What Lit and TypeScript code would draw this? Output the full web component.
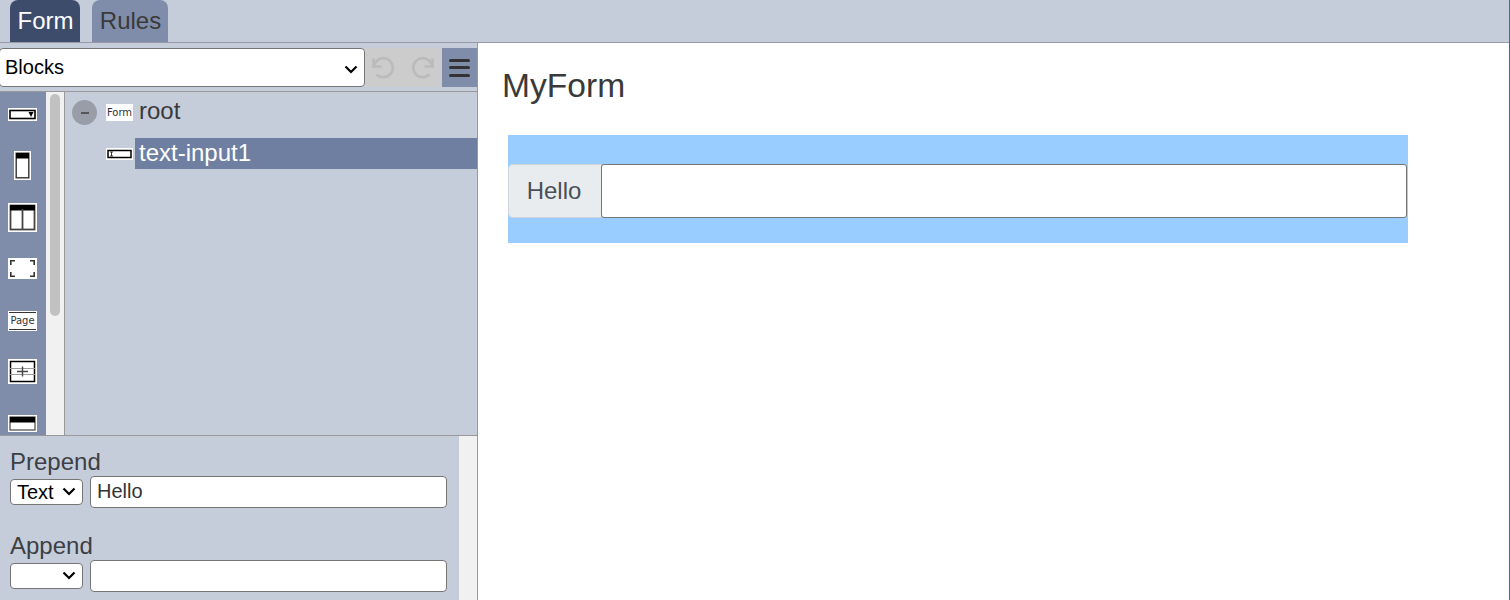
import { LitElement, html, css, svg } from "lit";
import { customElement } from "lit/decorators.js";

const palette = [
  svg`<svg width="29" height="13" viewBox="0 0 29 13"><rect width="29" height="13" fill="#fff"/><rect x="2" y="2.5" width="25" height="8" fill="#fff" stroke="#000" stroke-width="1.6"/><path d="M20.5 4h5l-2.500 5z" fill="#000"/></svg>`,
  svg`<svg width="17" height="29" viewBox="0 0 17 29"><rect width="17" height="29" fill="#fff"/><rect x="2.200" y="2.200" width="12.600" height="24.600" fill="#fff" stroke="#333" stroke-width="1.400"/><rect x="2" y="2" width="13" height="5.500" fill="#000"/></svg>`,
  svg`<svg width="29" height="29" viewBox="0 0 29 29"><rect width="29" height="29" fill="#fff"/><rect x="2.500" y="2.500" width="24" height="24" fill="#fff" stroke="#444" stroke-width="1.800"/><rect x="2" y="2" width="25" height="5.500" fill="#000"/><path d="M14.500 6v21" stroke="#444" stroke-width="1.800"/></svg>`,
  svg`<svg width="29" height="21" viewBox="0 0 29 21"><rect width="29" height="21" fill="#fff"/><path d="M2.800 7V2.800H7M22 2.800h4.200V7M2.800 14v4.200H7M22 18.200h4.200V14" fill="none" stroke="#333" stroke-width="1.600"/></svg>`,
  null,
  svg`<svg width="29" height="25" viewBox="0 0 29 25"><rect width="29" height="25" fill="#fff"/><rect x="2.500" y="2.500" width="24" height="20" fill="#fff" stroke="#000" stroke-width="1.500"/><path d="M2 9.500h25M2 15.500h25" stroke="#999" stroke-width="1"/><path d="M9 12.500h11M14.500 7.500v10" stroke="#444" stroke-width="1.400"/></svg>`,
  svg`<svg width="29" height="17" viewBox="0 0 29 17"><rect width="29" height="17" fill="#fff"/><rect x="2" y="2" width="25" height="13" fill="#fff" stroke="#444" stroke-width="1.200"/><rect x="2" y="2" width="25" height="5.500" fill="#000"/></svg>`,
];

const chevron = html`<svg class="chev" width="14" height="9" viewBox="0 0 14 9"><path d="M1.500 1.500L7 7l5.500-5.500" fill="none" stroke="#000" stroke-width="2.200"/></svg>`;

@customElement("app-root")
export class AppRoot extends LitElement {
  static styles = css`
    :host {
      display: block;
      width: 1510px;
      height: 600px;
      overflow: hidden;
      font-family: "Liberation Sans", Arial, sans-serif;
      color: #333;
      background: #fff;
      border-right: 1px solid #2f7a80;
      box-sizing: border-box;
    }
    .tabs {
      height: 42px;
      background: #c5cddb;
      border-bottom: 1px solid #99a;
      display: flex;
      gap: 12px;
      padding-left: 10px;
    }
    .tab {
      display: flex;
      align-items: center;
      justify-content: center;
      font-size: 24px;
      border-radius: 8px 8px 0 0;
      height: 42px;
      padding-left: 1px;
      box-sizing: border-box;
    }
    .tab.form { width: 70px; background: #3d4c6b; color: #fff; }
    .tab.rules { width: 76px; background: #7f8dab; color: #3a3a3a; }
    .body { display: flex; height: 557px; }
    .left {
      width: 477px;
      border-right: 1px solid #999;
      background: #c5cddb;
      display: flex;
      flex-direction: column;
      flex: none;
    }
    .toolbar {
      border-bottom: 1px solid #999;
      flex: none;
      display: flex;
      padding-top: 5px;
      box-sizing: border-box;
      height: 49px;
    }
    .sel-wrap { position: relative; flex: none; display: block; }
    .chev { position: absolute; right: 7px; top: 50%; margin-top: -5px; pointer-events: none; }
    .sel-wrap select {
      appearance: none;
      -webkit-appearance: none;
      display: block;
      box-sizing: border-box;
      font: 20px "Liberation Sans", Arial, sans-serif;
      background: #fff;
      color: #000;
      border: 1px solid #767676;
      border-radius: 4px;
      padding: 0 0 1px 5px;
      outline: 0;
    }
    .blocks { margin-left: -1px; }
    .blocks select { width: 366px; height: 39px; }
    .history {
      width: 77px;
      height: 39px;
      background: #ccc;
      display: flex;
      align-items: center;
      gap: 12px;
      padding-left: 6px;
      box-sizing: border-box;
    }
    .menu {
      width: 35px;
      height: 39px;
      background: #7f8dab;
      display: flex;
      flex-direction: column;
      align-items: center;
      justify-content: center;
      gap: 4.500px;
    }
    .menu i {
      display: block;
      width: 21px;
      height: 3px;
      background: #333;
      border-radius: 1.500px;
    }
    .mid {
      height: 343px;
      display: flex;
      border-bottom: 1px solid #999;
      flex: none;
      box-sizing: content-box;
    }
    .palette {
      width: 46px;
      background: #7f8dab;
      display: flex;
      flex-direction: column;
      align-items: center;
      gap: 6.600px;
      overflow: hidden;
      flex: none;
      box-sizing: border-box;
      padding-right: 1px;
    }
    .pitem {
      height: 45px;
      flex: none;
      display: flex;
      align-items: center;
      justify-content: center;
    }
    .pitem:first-child { margin-top: -0.5px; }
    .pagei {
      width: 29px;
      height: 20px;
      margin-top: 1px;
      background: #fff;
      box-sizing: border-box;
      display: flex;
      align-items: center;
      justify-content: center;
      font-family: "DejaVu Sans", sans-serif;
      font-size: 10px;
      color: #333;
      padding: 1px 1px;
    }
    .pagei span {
      border-top: 1px solid #333;
      border-bottom: 1px solid #333;
      width: 100%;
      height: 100%;
      box-sizing: border-box;
      text-align: center;
      line-height: 15px;
    }
    .sbar {
      width: 18px;
      background: #f1f1f1;
      flex: none;
      padding: 2px 4px 0;
      box-sizing: border-box;
    }
    .sbar i {
      display: block;
      height: 222px;
      background: #c1c1c1;
      border-radius: 5px;
    }
    .tree {
      flex: 1;
      border-left: 1px solid #999;
      font-size: 24px;
      color: #3a3a3a;
      display: flex;
      flex-direction: column;
    }
    .node {
      display: flex;
      align-items: center;
    }
    .node.root { margin-top: 8px; margin-bottom: 13px; height: 25px; padding-left: 7px; }
    .node.child { padding-left: 41px; height: 31px; }
    .minus {
      width: 25px;
      height: 25px;
      border-radius: 50%;
      background: #989da8;
      display: flex;
      align-items: center;
      justify-content: center;
      margin-right: 9px;
      flex: none;
    }
    .minus i { display: block; width: 8px; height: 2px; background: #555; }
    .formi {
      width: 27px;
      height: 17px;
      background: #fff;
      color: #333;
      font-family: "DejaVu Sans", sans-serif;
      font-size: 10px;
      line-height: 17px;
      text-align: center;
      margin-right: 6px;
      flex: none;
    }
    .rootlabel { margin-top: -4px; }
    .childicon { margin-right: 2px; display: block; flex: none; }
    .sel {
      flex: 1;
      background: #6e7fa1;
      color: #fff;
      height: 31px;
      line-height: 29px;
      padding-left: 4px;
    }
    .props { flex: 1; display: flex; min-height: 0; }
    .fields { flex: 1; padding: 12px 12px 0 10px; }
    .fscroll { width: 18px; background: #f1f1f1; flex: none; }
    .field { height: 84px; }
    .field label {
      display: block;
      font-size: 24px;
      line-height: 28px;
      color: #3c3f44;
    }
    .row { display: flex; align-items: center; gap: 7px; }
    .row select { width: 73px; height: 26px; padding-left: 6px; }
    .row input {
      flex: 1;
      min-width: 0;
      height: 32px;
      box-sizing: border-box;
      font: 20px "Liberation Sans", Arial, sans-serif;
      border: 1px solid #767676;
      border-radius: 4px;
      padding: 0 6px 2px;
      background: #fff;
      color: #333;
    }
    .main {
      flex: 1;
      padding: 21px 24px 0;
      min-width: 0;
      box-sizing: border-box;
    }
    h1 {
      margin: 0;
      font-size: 33.600px;
      font-weight: 400;
      line-height: 44px;
      color: #3a3a3a;
    }
    .block {
      margin: 27px 0 0 6px;
      width: 900px;
      height: 108px;
      background: #9cf;
      box-sizing: border-box;
      padding-top: 4px;
      display: flex;
      align-items: center;
    }
    .group { display: flex; width: 899px; height: 54px; }
    .prep {
      width: 93px;
      box-sizing: border-box;
      background: #e9ecef;
      border: 1px solid #ced4da;
      border-right: 0;
      border-radius: 5px 0 0 5px;
      color: #495057;
      font-size: 24px;
      display: flex;
      align-items: center;
      justify-content: center;
      padding-right: 2px;
      flex: none;
    }
    .group input {
      flex: 1;
      box-sizing: border-box;
      border: 1px solid #767676;
      border-radius: 3px;
      background: #fff;
    }
  `;

  render() {
    return html`
      <div class="tabs">
        <div class="tab form">Form</div>
        <div class="tab rules">Rules</div>
      </div>
      <div class="body">
        <div class="left">
          <div class="toolbar">
            <div class="sel-wrap blocks"><select><option>Blocks</option></select>${chevron}</div>
            <div class="history">
              <svg width="26" height="26" viewBox="0 0 26 26" fill="none" stroke="#bbb" stroke-width="2.600"><path d="M2.500 3.500V11.500H10.500"/><path d="M3.200 10A9.500 9.500 0 1 1 5.500 19.300"/></svg>
              <svg width="26" height="26" viewBox="0 0 26 26" fill="none" stroke="#bbb" stroke-width="2.600"><path d="M23.500 3.500V11.500H15.500"/><path d="M22.800 10A9.500 9.500 0 1 0 20.500 19.300"/></svg>
            </div>
            <div class="menu"><i></i><i></i><i></i></div>
          </div>
          <div class="mid">
            <div class="palette">
              ${palette.map(
                (p) => html`<div class="pitem">${p ?? html`<div class="pagei"><span>Page</span></div>`}</div>`
              )}
            </div>
            <div class="sbar"><i></i></div>
            <div class="tree">
              <div class="node root">
                <div class="minus"><i></i></div>
                <div class="formi">Form</div>
                <div class="rootlabel">root</div>
              </div>
              <div class="node child">
                <svg class="childicon" width="27" height="12" viewBox="0 0 27 12"><rect width="27" height="12" fill="#fff"/><rect x="2" y="2.500" width="23" height="7" fill="#fff" stroke="#000" stroke-width="1.500"/><path d="M4 4h3M4 8h3M5.500 4v4" stroke="#333" stroke-width="1"/></svg>
                <div class="sel">text-input1</div>
              </div>
            </div>
          </div>
          <div class="props">
            <div class="fields">
              <div class="field">
                <label>Prepend</label>
                <div class="row">
                  <div class="sel-wrap"><select><option>Text</option></select>${chevron}</div>
                  <input value="Hello" />
                </div>
              </div>
              <div class="field">
                <label>Append</label>
                <div class="row">
                  <div class="sel-wrap"><select><option></option></select>${chevron}</div>
                  <input />
                </div>
              </div>
            </div>
            <div class="fscroll"></div>
          </div>
        </div>
        <div class="main">
          <h1>MyForm</h1>
          <div class="block">
            <div class="group">
              <div class="prep">Hello</div>
              <input />
            </div>
          </div>
        </div>
      </div>
    `;
  }
}
